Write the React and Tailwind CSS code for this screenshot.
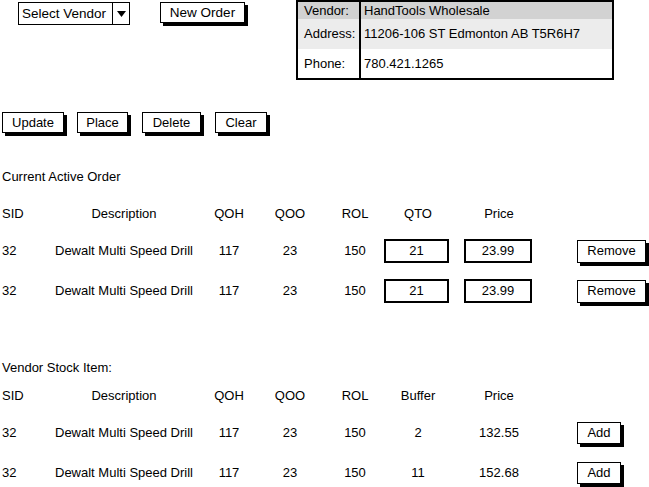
import React from "react";

const cols = "grid grid-cols-[42px_160px_50px_72px_58px_68px_94px_1fr] pl-[2px]";

function Btn({ children, className = "" }) {
  return (
    <div
      className={`flex items-center justify-center border border-black bg-white shadow-[3px_3px_0_#000] ${className}`}
    >
      {children}
    </div>
  );
}

function Box({ children, className = "" }) {
  return (
    <div className={`flex items-center justify-center border-2 border-black bg-white ${className}`}>
      {children}
    </div>
  );
}

function OrderRow({ qto, price }) {
  return (
    <div className={`${cols} h-[40px] items-center`}>
      <div>32</div>
      <div className="text-center">Dewalt Multi Speed Drill</div>
      <div className="text-center">117</div>
      <div className="text-center">23</div>
      <div className="text-center">150</div>
      <div>
        <Box className="w-[65px] h-[24px]">{qto}</Box>
      </div>
      <div className="pl-[12px]">
        <Box className="w-[68px] h-[24px]">{price}</Box>
      </div>
      <div className="pl-[31px]">
        <Btn className="w-[69px] h-[23px]">Remove</Btn>
      </div>
    </div>
  );
}

function StockRow({ buffer, price, h = "h-[40px]" }) {
  return (
    <div className={`${cols} ${h} items-center`}>
      <div>32</div>
      <div className="text-center">Dewalt Multi Speed Drill</div>
      <div className="text-center">117</div>
      <div className="text-center">23</div>
      <div className="text-center">150</div>
      <div className="text-center">{buffer}</div>
      <div className="text-center">{price}</div>
      <div className="pl-[31px]">
        <Btn className="w-[44px] h-[22px]">Add</Btn>
      </div>
    </div>
  );
}

export default function App() {
  return (
    <div
      className="w-[649px] h-[487px] bg-white text-black text-[13px] leading-[16px] overflow-hidden"
      style={{ fontFamily: '"Liberation Sans", Arial, sans-serif' }}
    >
      {/* top row */}
      <div className="flex items-start h-[80px]">
        <div className="ml-[18px] mt-[2px] w-[112px] h-[23px] border border-black flex bg-white">
          <div className="flex-1 flex items-center pl-[3px] text-[13.5px]">Select Vendor</div>
          <div className="w-[17px] border-l border-black flex items-center justify-center">
            <svg width="9" height="6" viewBox="0 0 9 6">
              <path d="M0 0 L9 0 L4.5 6 Z" fill="#000" />
            </svg>
          </div>
        </div>
        <Btn className="ml-[30px] mt-[2px] w-[85px] h-[21px] text-[13.5px]">New Order</Btn>
        <div className="ml-[51px] w-[318px] h-[80px] border-2 border-black flex flex-col text-[13px]">
          <div className="flex h-[17px] bg-[#d2d2d2]">
            <div className="w-[63px] pl-[6px] flex items-center border-r-2 border-black">Vendor:</div>
            <div className="flex-1 pl-[3px] flex items-center">HandTools Wholesale</div>
          </div>
          <div className="flex h-[30px] bg-[#ececec]">
            <div className="w-[63px] pl-[6px] flex items-center border-r-2 border-black">Address:</div>
            <div className="flex-1 pl-[3px] flex items-center">11206-106 ST Edmonton AB T5R6H7</div>
          </div>
          <div className="flex flex-1 bg-white">
            <div className="w-[63px] pl-[6px] flex items-center border-r-2 border-black">Phone:</div>
            <div className="flex-1 pl-[3px] flex items-center">780.421.1265</div>
          </div>
        </div>
      </div>

      {/* action buttons */}
      <div className="flex mt-[32px] pl-[2px] gap-[13px] text-[13px]">
        <Btn className="w-[62px] h-[21px]">Update</Btn>
        <Btn className="w-[51px] h-[21px]">Place</Btn>
        <Btn className="w-[59px] h-[21px] ml-[1px]">Delete</Btn>
        <Btn className="w-[52px] h-[21px] ml-[1px]">Clear</Btn>
      </div>

      {/* current active order */}
      <div className="mt-[36px] pl-[2px]">Current Active Order</div>
      <div className={`${cols} mt-[12px] h-[34px] items-center`}>
        <div>SID</div>
        <div className="text-center">Description</div>
        <div className="text-center">QOH</div>
        <div className="text-center">QOO</div>
        <div className="text-center">ROL</div>
        <div className="text-center">QTO</div>
        <div className="text-center">Price</div>
        <div />
      </div>
      <OrderRow qto="21" price="23.99" />
      <OrderRow qto="21" price="23.99" />

      {/* vendor stock */}
      <div className="mt-[49px] pl-[2px]">Vendor Stock Item:</div>
      <div className={`${cols} mt-[3px] h-[34px] items-center`}>
        <div>SID</div>
        <div className="text-center">Description</div>
        <div className="text-center">QOH</div>
        <div className="text-center">QOO</div>
        <div className="text-center">ROL</div>
        <div className="text-center">Buffer</div>
        <div className="text-center">Price</div>
        <div />
      </div>
      <StockRow buffer="2" price="132.55" />
      <StockRow buffer="11" price="152.68" h="h-[39px]" />
    </div>
  );
}
